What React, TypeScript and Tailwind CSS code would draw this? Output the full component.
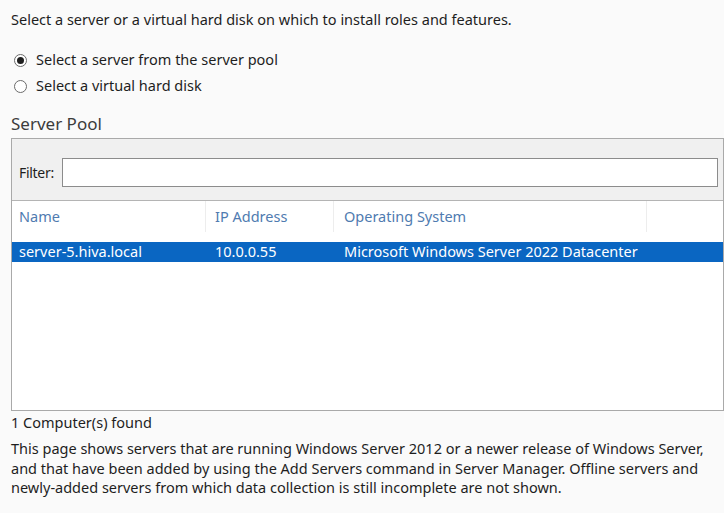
import React, { useState } from "react";

const font = { fontFamily: '"Noto Sans", "Segoe UI", sans-serif' };

function Radio({ checked, label, onClick }: { checked: boolean; label: string; onClick: () => void }) {
  return (
    <label className="flex items-center h-[26px] cursor-pointer" onClick={onClick}>
      <span className="w-[13px] h-[13px] rounded-full border border-[#6b6b6b] bg-white flex items-center justify-center">
        {checked && <span className="w-[7px] h-[7px] rounded-full bg-[#1f1f1f]" />}
      </span>
      <span className="ml-[9px] text-[14.5px] text-[#1e1e1e]">{label}</span>
    </label>
  );
}

export default function App() {
  const [mode, setMode] = useState(0);
  return (
    <div className="w-[724px] h-[513px] overflow-hidden bg-[#fafafa]" style={font}>
      <div className="pl-[11px] pt-[8px]">
        <p className="text-[14.5px] leading-[22px] text-[#1e1e1e]">
          Select a server or a virtual hard disk on which to install roles and features.
        </p>

        <div className="mt-[17px] pl-[3px]">
          <Radio checked={mode === 0} label="Select a server from the server pool" onClick={() => setMode(0)} />
          <Radio checked={mode === 1} label="Select a virtual hard disk" onClick={() => setMode(1)} />
        </div>

        <h2 className="mt-[14px] text-[17px] leading-[22px] text-[#3c3c3c]">Server Pool</h2>

        {/* Server pool panel */}
        <div className="mt-[3px] w-[713px] h-[273px] border border-[#a9a9a9] bg-white flex flex-col">
          <div className="h-[62px] bg-[#f0f0f0] border-b border-[#b4b4b4] flex items-center pl-[7px] pr-[5px] pt-[6px]">
            <span className="text-[14px] text-[#1e1e1e] w-[43px] tracking-[-0.3px]">Filter:</span>
            <input className="flex-1 h-[29px] border border-[#8c8c8c] bg-white outline-none px-1 text-[14px]" />
          </div>

          <div className="flex h-[31px] items-center text-[14.5px] text-[#4f7bb0]">
            <div className="w-[194px] h-full pl-[7px] flex items-center border-r border-[#ededed]">Name</div>
            <div className="w-[128px] h-full pl-[9px] flex items-center border-r border-[#ededed]">IP Address</div>
            <div className="w-[313px] h-full pl-[10px] flex items-center border-r border-[#ededed]">Operating System</div>
            <div className="flex-1" />
          </div>

          <div className="mt-[10px] flex h-[20px] items-center bg-[#0a66c2] text-[14.5px] text-white">
            <div className="w-[194px] pl-[7px]">server-5.hiva.local</div>
            <div className="w-[128px] pl-[9px]">10.0.0.55</div>
            <div className="pl-[10px]">Microsoft Windows Server 2022 Datacenter</div>
          </div>
        </div>

        <p className="text-[14.5px] leading-[22px] text-[#1e1e1e]">1 Computer(s) found</p>

        <p className="mt-[6px] whitespace-nowrap text-[14.5px] leading-[19.5px] text-[#1e1e1e]">
          This page shows servers that are running Windows Server 2012 or a newer release of Windows Server,
          <br />
          and that have been added by using the Add Servers command in Server Manager. Offline servers and
          <br />
          newly-added servers from which data collection is still incomplete are not shown.
        </p>
      </div>
    </div>
  );
}
